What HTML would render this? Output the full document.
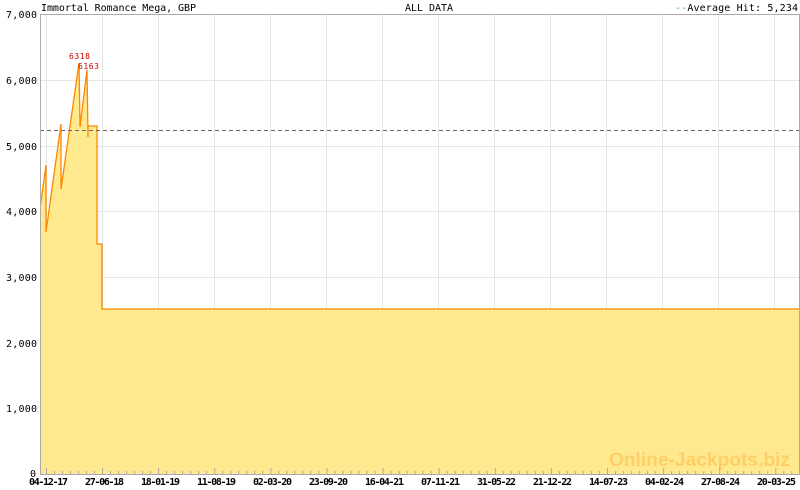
<!DOCTYPE html>
<html><head><meta charset="utf-8"><style>
html,body{margin:0;padding:0;background:#fff;width:800px;height:490px;overflow:hidden}
svg{display:block}
text{font-family:"DejaVu Sans Mono","Liberation Mono",monospace;font-size:10px;fill:#000}
</style></head><body>
<svg width="800" height="490" viewBox="0 0 800 490" xmlns="http://www.w3.org/2000/svg">
<defs>
<pattern id="tk" x="46" y="466" width="56.1" height="8" patternUnits="userSpaceOnUse">
<g stroke="#aaa" stroke-width="1">
<line x1="0.5" y1="2" x2="0.5" y2="8"/>
<line x1="8.5" y1="5" x2="8.5" y2="8"/><line x1="16.5" y1="5" x2="16.5" y2="8"/><line x1="24.5" y1="5" x2="24.5" y2="8"/><line x1="32.5" y1="5" x2="32.5" y2="8"/><line x1="40.5" y1="5" x2="40.5" y2="8"/><line x1="48.5" y1="5" x2="48.5" y2="8"/>
</g></pattern>
</defs>
<g stroke="#e6e6e6" stroke-width="1">
<line x1="40" y1="80.5" x2="799" y2="80.5"/>
<line x1="40" y1="146.5" x2="799" y2="146.5"/>
<line x1="40" y1="211.5" x2="799" y2="211.5"/>
<line x1="40" y1="277.5" x2="799" y2="277.5"/>
<line x1="40" y1="343.5" x2="799" y2="343.5"/>
<line x1="40" y1="408.5" x2="799" y2="408.5"/>
<line x1="46.5" y1="14" x2="46.5" y2="474"/><line x1="102.5" y1="14" x2="102.5" y2="474"/><line x1="158.5" y1="14" x2="158.5" y2="474"/><line x1="214.5" y1="14" x2="214.5" y2="474"/><line x1="270.5" y1="14" x2="270.5" y2="474"/><line x1="326.5" y1="14" x2="326.5" y2="474"/><line x1="382.5" y1="14" x2="382.5" y2="474"/><line x1="438.5" y1="14" x2="438.5" y2="474"/><line x1="494.5" y1="14" x2="494.5" y2="474"/><line x1="550.5" y1="14" x2="550.5" y2="474"/><line x1="606.5" y1="14" x2="606.5" y2="474"/><line x1="662.5" y1="14" x2="662.5" y2="474"/><line x1="718.5" y1="14" x2="718.5" y2="474"/><line x1="774.5" y1="14" x2="774.5" y2="474"/>
</g>
<polygon fill="#ffe98f" points="40.5,474 40.5,205 46,165 46,232 61,124 61,189 79,63 80,127 87,70 88,137 88,126 97,126 97,244 102,244 102,309 799,309 799,474"/>
<text x="609" y="466" textLength="181" style="font-family:'Liberation Sans',sans-serif;font-weight:bold;font-size:19px;fill:#ffcf66">Online-Jackpots.biz</text>
<polyline fill="none" stroke="#ff8800" stroke-width="1.3" points="40.5,205 46,165 46,232 61,124 61,189 79,63 80,127 87,70 88,137 88,126 97,126 97,244 102,244 102,309 799,309"/>
<line x1="40" y1="130.5" x2="799" y2="130.5" stroke="#666" stroke-dasharray="4,3"/>
<rect x="41" y="466" width="758" height="8" fill="url(#tk)"/>
<g stroke="#aaa" stroke-width="1">
<line x1="40" y1="14.5" x2="800" y2="14.5"/>
<line x1="40.5" y1="14" x2="40.5" y2="475"/>
<line x1="40" y1="474.5" x2="800" y2="474.5"/>
<line x1="799.5" y1="14" x2="799.5" y2="475"/>
</g>
<text x="41" y="11" textLength="155">Immortal Romance Mega, GBP</text>
<text x="405" y="11" textLength="48">ALL DATA</text>
<text x="675" y="11" textLength="123"><tspan style="fill:#3399cc">--</tspan>Average Hit: 5,234</text>
<g>
<text x="6" y="18" textLength="31">7,000</text><text x="6" y="84" textLength="31">6,000</text><text x="6" y="150" textLength="31">5,000</text><text x="6" y="215" textLength="31">4,000</text><text x="6" y="281" textLength="31">3,000</text><text x="6" y="347" textLength="31">2,000</text><text x="6" y="412" textLength="31">1,000</text><text x="30" y="477">0</text>
</g>
<text x="69" y="59" textLength="21" style="fill:#cc0000;font-size:8px">6318</text>
<text x="78" y="69" textLength="21" style="fill:#cc0000;font-size:8px">6163</text>
<g style="font-size:8px;font-weight:bold">
<text x="29" y="485" textLength="39">04-12-17</text><text x="85" y="485" textLength="39">27-06-18</text><text x="141" y="485" textLength="39">18-01-19</text><text x="197" y="485" textLength="39">11-08-19</text><text x="253" y="485" textLength="39">02-03-20</text><text x="309" y="485" textLength="39">23-09-20</text><text x="365" y="485" textLength="39">16-04-21</text><text x="421" y="485" textLength="39">07-11-21</text><text x="477" y="485" textLength="39">31-05-22</text><text x="533" y="485" textLength="39">21-12-22</text><text x="589" y="485" textLength="39">14-07-23</text><text x="645" y="485" textLength="39">04-02-24</text><text x="701" y="485" textLength="39">27-08-24</text><text x="757" y="485" textLength="39">20-03-25</text>
</g>
</svg>
</body></html>
